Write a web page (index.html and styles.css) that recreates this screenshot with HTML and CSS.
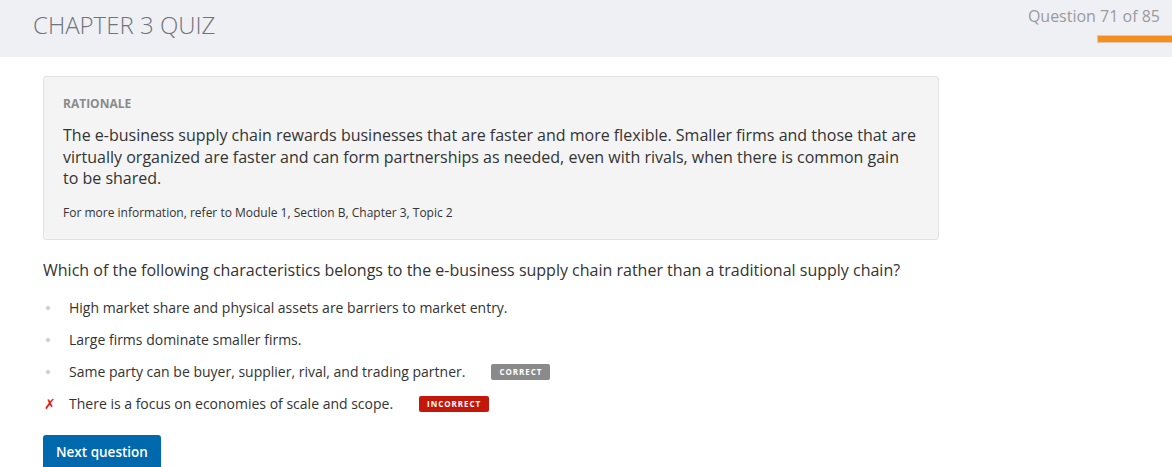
FILE: index.html
```html
<!DOCTYPE html>
<html lang="en">
<head>
<meta charset="utf-8">
<title>Chapter 3 Quiz</title>
<link rel="stylesheet" href="styles.css">
</head>
<body>
<header class="topbar">
  <h1 class="title">CHAPTER 3 QUIZ</h1>
  <div class="progress">
    <div class="counter">Question 71 of 85</div>
    <div class="bar"></div>
  </div>
</header>
<main class="content">
  <section class="rationale">
    <h2 class="rationale-head">RATIONALE</h2>
    <p class="rationale-body">The e-business supply chain rewards businesses that are faster and more flexible. Smaller firms and those that are virtually organized are faster and can form partnerships as needed, even with rivals, when there is common gain to be shared.</p>
    <p class="rationale-ref">For more information, refer to Module 1, Section B, Chapter 3, Topic 2</p>
  </section>
  <p class="question">Which of the following characteristics belongs to the e-business supply chain rather than a traditional supply chain?</p>
  <ul class="options">
    <li class="option"><span class="mark dot"></span><span class="opt-text">High market share and physical assets are barriers to market entry.</span></li>
    <li class="option"><span class="mark dot"></span><span class="opt-text">Large firms dominate smaller firms.</span></li>
    <li class="option"><span class="mark dot"></span><span class="opt-text">Same party can be buyer, supplier, rival, and trading partner.</span><span class="badge badge-correct">CORRECT</span></li>
    <li class="option"><span class="mark cross">✗</span><span class="opt-text">There is a focus on economies of scale and scope.</span><span class="badge badge-incorrect">INCORRECT</span></li>
  </ul>
  <button class="next-btn">Next question</button>
</main>
</body>
</html>
```

FILE: styles.css
```css
* { box-sizing: border-box; }
html, body { margin: 0; padding: 0; }
body {
  font-family: "Open Sans", "Liberation Sans", sans-serif;
  background: #fff;
  color: #333;
  overflow: hidden;
}
.topbar {
  height: 57px;
  background: #eff0f4;
  display: flex;
  justify-content: space-between;
  align-items: flex-start;
  padding-left: 33px;
}
.title {
  margin: 8px 0 0;
  font-size: 24px;
  font-weight: 300;
  color: #6f737b;
}
.progress {
  display: flex;
  flex-direction: column;
  align-items: flex-end;
}
.counter {
  margin-top: 5px;
  margin-right: 12px;
  font-size: 16px;
  color: #9a9a9f;
}
.bar {
  margin-top: 8px;
  width: 75px;
  height: 8px;
  background: #f28f1e;
  border: 1px solid #dcc9b0;
  border-right: none;
}
.content {
  padding: 19px 0 0 43px;
  width: 939px;
}
.rationale {
  background: #f4f4f4;
  border: 1px solid #e2e2e2;
  border-radius: 3px;
  padding: 19px 20px 18px 19px;
}
.rationale-head {
  margin: 0;
  font-size: 12px;
  font-weight: 700;
  color: #8a8a8a;
  line-height: 16px;
}
.rationale-body {
  margin: 13px 0 0;
  font-size: 16px;
  line-height: 21.5px;
  color: #333;
}
.rationale-ref {
  margin: 15px 0 0;
  font-size: 12px;
  line-height: 16px;
  color: #333;
}
.question {
  margin: 19px 0 0;
  font-size: 16px;
  line-height: 22px;
  color: #333;
}
.options {
  list-style: none;
  margin: 11px 0 0;
  padding: 0;
}
.option {
  display: flex;
  align-items: center;
  height: 32px;
  font-size: 14px;
  color: #333;
}
.mark {
  width: 26px;
  display: flex;
  align-items: center;
}
.dot::before {
  content: "";
  display: block;
  width: 4px;
  height: 4px;
  margin-left: 3px;
  background: #d2d2d2;
  transform: rotate(45deg);
}
.cross {
  color: #e0191f;
  font-size: 14px;
  font-style: italic;
  font-weight: 700;
  padding-left: 1px;
  font-family: "DejaVu Sans", sans-serif;
}
.opt-text { white-space: nowrap; }
.badge {
  display: inline-block;
  margin-left: 26px;
  height: 16px;
  line-height: 16px;
  padding: 0 8px;
  font-size: 8px;
  font-weight: 700;
  letter-spacing: 0.95px;
  color: #fff;
  border-radius: 2px;
}
.badge-correct { background: #8a8a8a; }
.badge-incorrect { background: #c4170c; }
.next-btn {
  margin-top: 15px;
  background: #0068ac;
  color: #fff;
  border: none;
  border-radius: 3px;
  font-family: "Open Sans", "Liberation Sans", sans-serif;
  font-size: 13.5px;
  font-weight: 600;
  line-height: 20px;
  padding: 7px 13px 9px;
  white-space: nowrap;
  cursor: pointer;
}
```
